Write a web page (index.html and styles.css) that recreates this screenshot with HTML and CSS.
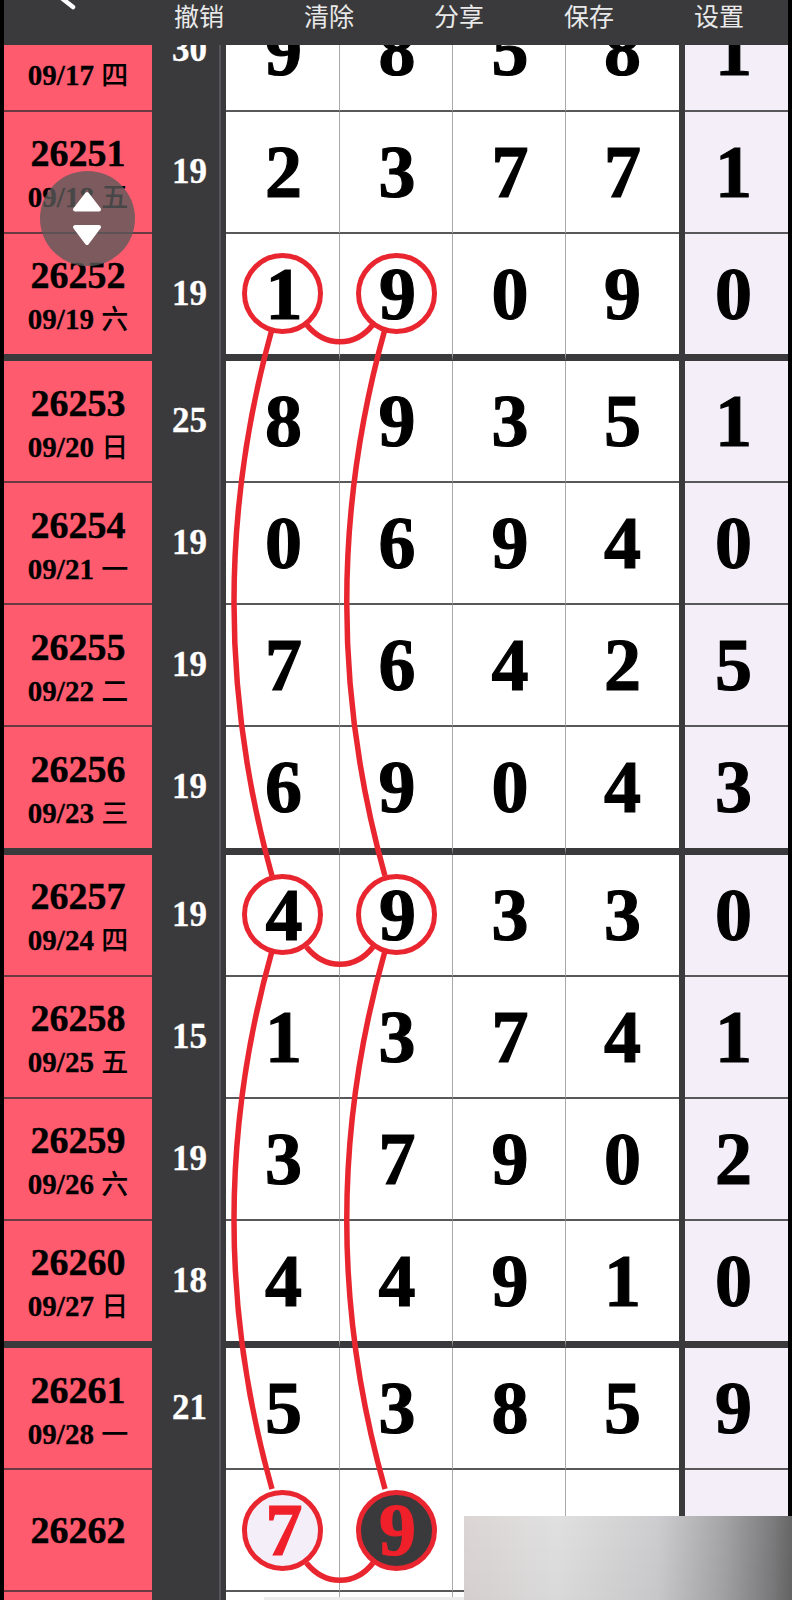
FILE: index.html
```html
<!DOCTYPE html>
<html lang="zh">
<head>
<meta charset="utf-8">
<title>26262</title>
<link rel="stylesheet" href="styles.css">
</head>
<body>
<header class="toolbar">
  <svg class="back" width="40" height="12" viewBox="0 0 40 12"><path d="M0 -4 L14 7" /></svg>
  <span class="tool">撤销</span>
  <span class="tool">清除</span>
  <span class="tool">分享</span>
  <span class="tool">保存</span>
  <span class="tool">设置</span>
</header>

<main class="chart">
  <div class="row">
    <div class="issue"><b>26250</b><small>09/17 <i>四</i></small></div><div class="count">30</div><div class="rail"></div>
    <div class="cell">9</div><div class="cell">8</div><div class="cell">5</div><div class="cell end">8</div><div class="cell last">1</div>
  </div>
  <div class="row">
    <div class="issue"><b>26251</b><small>09/18 <i>五</i></small></div><div class="count">19</div><div class="rail"></div>
    <div class="cell">2</div><div class="cell">3</div><div class="cell">7</div><div class="cell end">7</div><div class="cell last">1</div>
  </div>
  <div class="row thick">
    <div class="issue"><b>26252</b><small>09/19 <i>六</i></small></div><div class="count">19</div><div class="rail"></div>
    <div class="cell"><span class="ring">1</span></div><div class="cell"><span class="ring">9</span></div><div class="cell">0</div><div class="cell end">9</div><div class="cell last">0</div>
  </div>
  <div class="row">
    <div class="issue"><b>26253</b><small>09/20 <i>日</i></small></div><div class="count">25</div><div class="rail"></div>
    <div class="cell">8</div><div class="cell">9</div><div class="cell">3</div><div class="cell end">5</div><div class="cell last">1</div>
  </div>
  <div class="row">
    <div class="issue"><b>26254</b><small>09/21 <i>一</i></small></div><div class="count">19</div><div class="rail"></div>
    <div class="cell">0</div><div class="cell">6</div><div class="cell">9</div><div class="cell end">4</div><div class="cell last">0</div>
  </div>
  <div class="row">
    <div class="issue"><b>26255</b><small>09/22 <i>二</i></small></div><div class="count">19</div><div class="rail"></div>
    <div class="cell">7</div><div class="cell">6</div><div class="cell">4</div><div class="cell end">2</div><div class="cell last">5</div>
  </div>
  <div class="row thick">
    <div class="issue"><b>26256</b><small>09/23 <i>三</i></small></div><div class="count">19</div><div class="rail"></div>
    <div class="cell">6</div><div class="cell">9</div><div class="cell">0</div><div class="cell end">4</div><div class="cell last">3</div>
  </div>
  <div class="row">
    <div class="issue"><b>26257</b><small>09/24 <i>四</i></small></div><div class="count">19</div><div class="rail"></div>
    <div class="cell"><span class="ring">4</span></div><div class="cell"><span class="ring">9</span></div><div class="cell">3</div><div class="cell end">3</div><div class="cell last">0</div>
  </div>
  <div class="row">
    <div class="issue"><b>26258</b><small>09/25 <i>五</i></small></div><div class="count">15</div><div class="rail"></div>
    <div class="cell">1</div><div class="cell">3</div><div class="cell">7</div><div class="cell end">4</div><div class="cell last">1</div>
  </div>
  <div class="row">
    <div class="issue"><b>26259</b><small>09/26 <i>六</i></small></div><div class="count">19</div><div class="rail"></div>
    <div class="cell">3</div><div class="cell">7</div><div class="cell">9</div><div class="cell end">0</div><div class="cell last">2</div>
  </div>
  <div class="row thick">
    <div class="issue"><b>26260</b><small>09/27 <i>日</i></small></div><div class="count">18</div><div class="rail"></div>
    <div class="cell">4</div><div class="cell">4</div><div class="cell">9</div><div class="cell end">1</div><div class="cell last">0</div>
  </div>
  <div class="row">
    <div class="issue"><b>26261</b><small>09/28 <i>一</i></small></div><div class="count">21</div><div class="rail"></div>
    <div class="cell">5</div><div class="cell">3</div><div class="cell">8</div><div class="cell end">5</div><div class="cell last">9</div>
  </div>
  <div class="row">
    <div class="issue solo"><b>26262</b></div><div class="count"></div><div class="rail"></div>
    <div class="cell"><span class="ring pick-light">7</span></div><div class="cell"><span class="ring pick-dark">9</span></div><div class="cell"></div><div class="cell end"></div><div class="cell last"></div>
  </div>
  <div class="row tail">
    <div class="issue solo"></div><div class="count"></div><div class="rail"></div>
    <div class="cell"></div><div class="cell"></div><div class="cell"></div><div class="cell end"></div><div class="cell last"></div>
  </div>
</main>

<svg class="links" width="792" height="1600" viewBox="0 0 792 1600">
  <path d="M272 329 Q196 602.5 272 876" />
  <path d="M385 329 Q308.5 602.5 385 876" />
  <path d="M272 951 Q196 1220 272 1489" />
  <path d="M385 951 Q308.5 1220 385 1489" />
  <path d="M306.5 324.5 C325 347.5 355 347.5 373 324.5" />
  <path d="M306.5 947 C325 970 355 970 373 947" />
  <path d="M306.5 1563 C325 1586 355 1586 373 1563" />
</svg>

<div class="scroller">
  <svg width="95" height="95" viewBox="0 0 95 95">
    <polygon points="47,23 35,38.5 59,38.5" />
    <polygon points="35,56 59,56 47,72" />
  </svg>
</div>
<div class="smear"></div>
<div class="sheet"></div>
</body>
</html>
```
FILE: styles.css
```css
* { box-sizing: border-box; }

html, body { margin: 0; padding: 0; }

body {
  position: relative;
  width: 792px;
  height: 1600px;
  padding: 0 4px;
  overflow: hidden;
  background: #000;
  font-family: "Liberation Serif", "Noto Sans CJK SC", serif;
}

.toolbar {
  position: absolute;
  top: 0;
  left: 4px;
  z-index: 3;
  display: flex;
  width: 784px;
  height: 45px;
  padding-left: 130px;
  background: #3a3a3c;
}

.back {
  position: absolute;
  top: 0;
  left: 55px;
  fill: none;
  stroke: #fff;
  stroke-width: 4.5;
  stroke-linecap: round;
}

.tool {
  width: 130px;
  height: 30px;
  color: #e9e9e9;
  font: 400 25px/30px "Noto Sans CJK SC", sans-serif;
  text-align: center;
}

.chart {
  margin-top: -10.5px;
  background: #3a3a3c;
}

.row {
  display: grid;
  grid-template-columns: 148px 67px 7px 114px 113px 113px 113px 109px;
  height: 122px;
}

.row.thick { height: 127.5px; }
.row.tail { height: 8px; }

.issue, .cell {
  border-bottom: 2px solid #58585b;
}

.row.thick .issue, .row.thick .cell {
  border-bottom: 7px solid #3a3a3c;
}

.row.tail .issue, .row.tail .cell {
  border-bottom: 0;
}

.issue {
  display: flex;
  flex-direction: column;
  align-items: center;
  justify-content: center;
  padding-top: 6px;
  background: #ff5b6e;
  border-bottom-color: #6a3a44;
  color: #000;
}

.issue.solo { padding-top: 0; }

.issue b {
  font-size: 38px;
  font-weight: 700;
  line-height: 44px;
  -webkit-text-stroke: 0.4px #000;
}

.issue small {
  font-size: 29px;
  font-weight: 700;
  line-height: 42px;
  white-space: nowrap;
  -webkit-text-stroke: 0.3px #000;
}

.issue i {
  font: 500 27px/42px "Noto Sans CJK SC", sans-serif;
  -webkit-text-stroke: 0;
}

.count {
  display: flex;
  align-items: center;
  justify-content: center;
  padding: 0 0 2px 8px;
  color: #fff;
  font-size: 35px;
  font-weight: 700;
  -webkit-text-stroke: 0.3px #fff;
}

.row.thick .count { padding-bottom: 7px; }

.rail { border-left: 2px solid #56565a; }

.cell {
  display: flex;
  align-items: center;
  justify-content: center;
  padding-left: 2px;
  background: #fff;
  border-right: 1.5px solid #a9a9a9;
  color: #000;
  font-size: 74px;
  font-weight: 700;
  line-height: 1;
  -webkit-text-stroke: 1.2px currentColor;
}

.cell.end {
  padding-left: 0;
  border-right: 0;
}

.cell.last {
  margin-left: 6px;
  padding: 0 6px 0 0;
  background: #f3eef8;
  border-right: 0;
}

.ring {
  display: flex;
  align-items: center;
  justify-content: center;
  flex: none;
  width: 81px;
  height: 81px;
  margin-left: -2px;
  padding-left: 3px;
  border: 5px solid #e9262f;
  border-radius: 50%;
}

.pick-light { background: #f3eef8; color: #f0202a; }
.pick-dark { background: #3a3a3c; color: #f0202a; }

.links {
  position: absolute;
  top: 0;
  left: 0;
  z-index: 1;
  fill: none;
  stroke: #e9262f;
  stroke-width: 5.5;
  pointer-events: none;
}

.scroller {
  position: absolute;
  top: 171px;
  left: 40px;
  z-index: 2;
  width: 95px;
  height: 95px;
  border-radius: 50%;
  background: rgba(90, 90, 90, 0.79);
}

.scroller svg {
  display: block;
  fill: #fff;
  stroke: #fff;
  stroke-width: 4;
  stroke-linejoin: round;
}

.smear {
  position: absolute;
  right: 328px;
  bottom: 0;
  z-index: 2;
  width: 200px;
  height: 3px;
  background: #ececec;
}

.sheet {
  position: absolute;
  right: 0;
  bottom: 0;
  z-index: 4;
  width: 328px;
  height: 84px;
  background:
    linear-gradient(180deg, rgba(0, 0, 0, 0), rgba(0, 0, 0, 0.03)),
    linear-gradient(90deg, #dcd5d5 0%, #e0e0e0 28%, #cdcdcf 59%, #a5a5a8 79%, #7c7b7d 94%, #666 100%);
}
```
